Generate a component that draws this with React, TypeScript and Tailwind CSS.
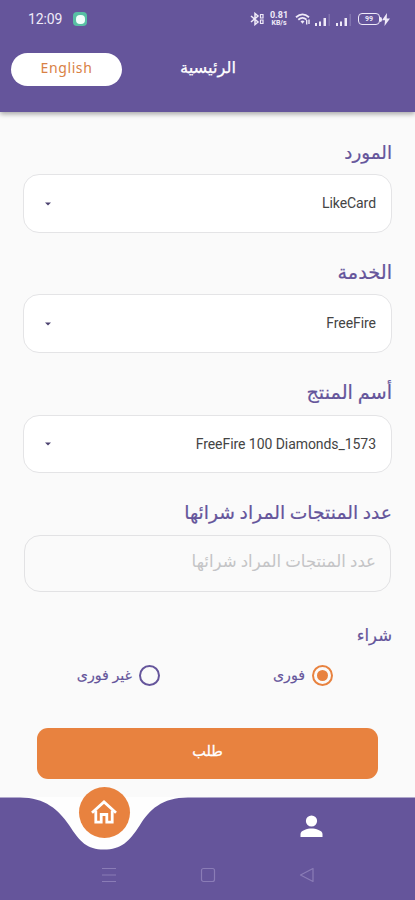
import { useState } from "react";
import type { ReactNode } from "react";

const PRODUCT_COUNT_LABEL = "عدد المنتجات المراد شرائها";

function StatusBar() {
  return (
    <div dir="ltr" className="flex h-[38px] items-center pl-[28px] pr-[25px] text-[#efeaf8]">
      <span className="w-[36px] whitespace-nowrap text-[14px] tracking-[-0.1px]">12:09</span>
      <span className="ml-[9px] flex h-[14px] w-[14px] items-center justify-center rounded-[4px] bg-[#58bfa4]">
        <span className="h-[9px] w-[9px] rounded-[4px] bg-[#f1fffb]" />
      </span>

      <div className="ml-auto flex items-center">
        {/* bluetooth */}
        <svg width="14" height="14" viewBox="0 0 14 14" fill="none" stroke="currentColor" strokeWidth="1.500">
          <path d="M1 4l7 6-3 2.500v-11L8 4l-7 6" />
          <path d="M10.500 2.500h2.500v3.500h-2.500zM10.500 8h2.500v3.500h-2.500z" strokeWidth="1.200" />
        </svg>
        <div className="ml-[5px] flex w-[20px] flex-col items-center whitespace-nowrap font-bold">
          <span className="text-[9px] leading-[8px]">0.81</span>
          <span className="text-[7px] leading-[8px]">KB/s</span>
        </div>
        <svg className="ml-[6px]" width="16" height="14" viewBox="0 0 16 14" fill="none" stroke="currentColor" strokeWidth="1.800">
          <path d="M1 5.200Q7.500-.5 14 5.200M3.300 7.700Q7.500 4 11.500 7.700" />
          <path d="M5.500 9.300Q7.500 7.600 9.500 9.300L7.500 11.800z" fill="currentColor" stroke="none" />
          <path d="M11.700 12.500V8M14 7.500V12" strokeWidth="1.400" />
        </svg>
        <Signal className="ml-[4px]" />
        <Signal className="ml-[5px]" />
        <div className="ml-[6px] flex h-[12px] w-[22px] items-center justify-center rounded-[4px] border-[1.5px] border-[#efeaf8] text-[7px] font-bold leading-none">
          99
        </div>
        <span className="h-[5px] w-[2px] rounded-r bg-[#efeaf8]" />
        <svg width="8" height="13" viewBox="0 0 8 13" fill="currentColor">
          <path d="M5 0L0 7.300h3L2.500 13 8 5.500H4.700z" />
        </svg>
      </div>
    </div>
  );
}

function Signal({ className }: { className: string }) {
  return (
    <svg className={className} width="16" height="13" viewBox="0 0 16 13" fill="currentColor">
      <path d="M0 10h2v3H0zM4 8.500h2V13H4zM8.500 5h2.500v8h-2.500z" />
      <path d="M13.500 1h1.500v12h-1.500z" opacity=".2" />
    </svg>
  );
}

function Label({ children, size = "text-[18.3px]" }: { children: ReactNode; size?: string }) {
  return (
    <h2 className={`h-[26px] whitespace-nowrap leading-[26px] text-[#65559b] [-webkit-text-stroke:0.2px_#65559b] ${size}`}>
      {children}
    </h2>
  );
}

interface SelectFieldProps {
  label: string;
  value: string;
  labelSize?: string;
  boxClass: string;
}

function SelectField({ label, value, labelSize, boxClass }: SelectFieldProps) {
  return (
    <div className="h-[120px]">
      <Label size={labelSize}>{label}</Label>
      <button
        className={`flex w-full items-center justify-between rounded-[16px] border border-[#e4e4e6] bg-white pl-[21px] pr-[15px] ${boxClass}`}
      >
        <span dir="ltr" className="text-[14px] tracking-[-0.06px] text-[#444]">{value}</span>
        <svg width="6" height="4" viewBox="0 0 6 4" fill="#4c4370">
          <path d="M0 .5h6L3 3.500z" />
        </svg>
      </button>
    </div>
  );
}

function RadioOption({ label, checked, onSelect }: { label: string; checked: boolean; onSelect: () => void }) {
  return (
    <button onClick={onSelect} role="radio" aria-checked={checked} className="flex items-center gap-[7px]">
      <span
        className={`flex h-[21px] w-[21px] items-center justify-center rounded-full border-2 ${
          checked ? "border-[#e8823f]" : "border-[#65559b]"
        }`}
      >
        {checked && <span className="h-[11px] w-[11px] rounded-full bg-[#e8823f]" />}
      </span>
      <span className="whitespace-nowrap text-[14.2px] leading-[22px] text-[#65559b] [-webkit-text-stroke:0.15px_#65559b]">
        {label}
      </span>
    </button>
  );
}

function BottomNav() {
  return (
    <nav dir="ltr" className="relative h-[103px]">
      <svg className="absolute inset-0" width="415" height="103" viewBox="0 0 415 103">
        <path d="M0 0H208V53H0z" fill="#fefefe" />
        <path
          d="M0 .5H20C45 .5 59 13 69 28C80 45 87 52.500 104 52.500C121 52.500 129 45 140 28C149 13 162 .5 188 .5H415V103H0z"
          fill="#65559b"
        />
      </svg>
      <button className="absolute left-[79px] top-[-10px] flex h-[51px] w-[51px] items-center justify-center rounded-full bg-[#e8823f] pb-[2px] pr-px">
        <svg width="26" height="24" viewBox="0 0 26 24" fill="none" stroke="white" strokeWidth="2.800">
          <path d="M1 12.800L13 2l12 10.800" />
          <path d="M4.800 10.500v11.600h5.400v-7.600h5.600v7.600h5.400V10.500" />
        </svg>
      </button>
      <button className="absolute left-[300px] top-[18px]">
        <svg width="23" height="23" viewBox="0 0 23 23" fill="white">
          <circle cx="11.500" cy="6" r="5.600" />
          <path d="M.5 22v-3c0-3.600 7-5.500 11-5.500s11 1.900 11 5.500v3z" />
        </svg>
      </button>
      <div className="absolute inset-x-0 top-[69px] flex h-[18px] items-center pl-[101px] text-[#8a7cb6]">
        <svg width="16" height="18" viewBox="0 0 16 18" stroke="currentColor" strokeWidth="1.200">
          <path d="M1 2.500h14M1 9h14M1 15.500h14" />
        </svg>
        <svg className="ml-[83px]" width="16" height="18" viewBox="0 0 16 18" fill="none" stroke="currentColor" strokeWidth="1.200">
          <rect x="1.500" y="2.500" width="13" height="13" rx="2" />
        </svg>
        <svg className="ml-[83px]" width="16" height="18" viewBox="0 0 16 18" fill="none" stroke="currentColor" strokeWidth="1.200" strokeLinejoin="round">
          <path d="M14 2.500v13L1.500 9z" />
        </svg>
      </div>
    </nav>
  );
}

export default function App() {
  const [purchase, setPurchase] = useState("instant");

  return (
    <div
      dir="rtl"
      className="flex h-[900px] w-[415px] flex-col overflow-hidden bg-[#fafafa] font-[Roboto,'DejaVu_Sans',sans-serif]"
    >
      <header className="h-[112px] shrink-0 bg-[#65559b] shadow-[0_2px_5px_rgba(0,0,0,0.35)]">
        <StatusBar />
        <div className="flex h-[62px] items-center justify-between pl-[11px] pr-[179px]">
          <h1 className="whitespace-nowrap pb-[2px] text-[16.3px] text-white [-webkit-text-stroke:0.25px_white]">الرئيسية</h1>
          <button className="h-[33px] w-[111px] rounded-full bg-white pb-[3px] font-['Noto_Sans'] text-[14px] tracking-[0.6px] text-[#d98145]">
            English
          </button>
        </div>
      </header>

      <main className="flex-1 px-[23px] pt-[28px]">
        <SelectField label="المورد" value="LikeCard" boxClass="mt-[8px] h-[59px]" />
        <SelectField label="الخدمة" value="FreeFire" labelSize="text-[19.3px]" boxClass="mt-[8px] h-[59px]" />
        <SelectField label="أسم المنتج" value="FreeFire 100 Diamonds_1573" labelSize="text-[19.3px]" boxClass="mt-[9px] h-[58px]" />

        <Label size="text-[18.7px]">{PRODUCT_COUNT_LABEL}</Label>
        <input
          aria-label={PRODUCT_COUNT_LABEL}
          placeholder={PRODUCT_COUNT_LABEL}
          className="mx-[1px] mt-[9px] block h-[57px] w-[367px] rounded-[16px] border border-[#e2e2e4] bg-transparent pb-[4px] pl-4 pr-[14px] text-[16.6px] text-[#65559b] outline-none placeholder:text-[#c4c4c6]"
        />

        <div className="mt-[31px]">
          <Label size="text-[16.5px]">شراء</Label>
        </div>
        <div role="radiogroup" className="mt-[15px] flex gap-[113px] pr-[59px]">
          <RadioOption label="فورى" checked={purchase === "instant"} onSelect={() => setPurchase("instant")} />
          <RadioOption label="غير فورى" checked={purchase === "later"} onSelect={() => setPurchase("later")} />
        </div>

        <button className="mx-[14px] mt-[42px] block h-[51px] w-[341px] rounded-[11px] bg-[#e8823f] pb-[4px] text-[14.5px] text-white [-webkit-text-stroke:0.3px_white]">
          طلب
        </button>
      </main>

      <BottomNav />
    </div>
  );
}
